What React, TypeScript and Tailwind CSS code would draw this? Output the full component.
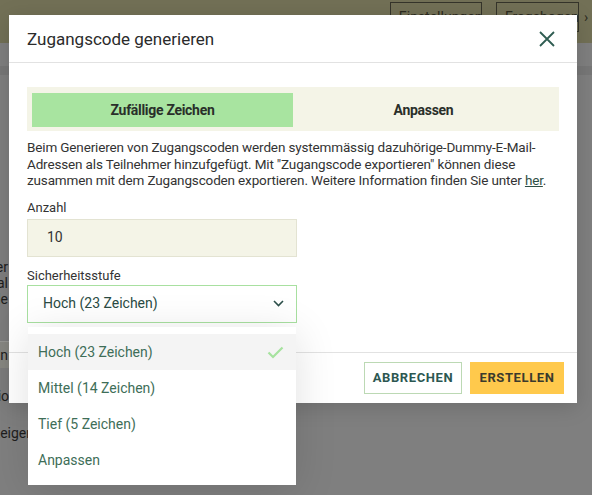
import { useState } from 'react';

const levels = ['Hoch (23 Zeichen)', 'Mittel (14 Zeichen)', 'Tief (5 Zeichen)', 'Anpassen'];

function CloseIcon() {
  return (
    <svg width="18" height="18" viewBox="0 0 18 18" fill="none">
      <path d="M2 2L16 16M16 2L2 16" stroke="#2f5d52" strokeWidth="1.8" />
    </svg>
  );
}

function Chevron() {
  return (
    <svg width="11" height="7" viewBox="0 0 11 7" fill="none">
      <path d="M1 1L5.5 5.5L10 1" stroke="#2c4f4a" strokeWidth="1.6" />
    </svg>
  );
}

function Check() {
  return (
    <svg width="17" height="13" viewBox="0 0 17 13" fill="none">
      <path d="M1.5 6.5L6 11L15.5 1.5" stroke="#a6e29f" strokeWidth="2.2" />
    </svg>
  );
}

export default function App() {
  const [tab, setTab] = useState(0);
  const [level] = useState(0);

  return (
    <div className="relative w-[592px] h-[495px] overflow-hidden bg-[#7f7f7f] font-['Roboto',sans-serif]">
      {/* page behind the overlay */}
      <div className="h-[43px] bg-[#727056] flex justify-end items-start pt-[2px] gap-[5px] text-[14px] text-[#2c2b20]">
        <div className="border border-[#35342a] px-[8px] h-[30px] flex items-center w-[92px] whitespace-nowrap">Einstellungen</div>
        <span className="leading-[30px]">›</span>
        <div className="border border-[#35342a] px-[8px] h-[30px] flex items-center w-[83px] whitespace-nowrap">Fragebogen</div>
        <span className="leading-[30px] w-[8px]">›</span>
      </div>
      <div className="h-[23px]" />
      <div className="h-[9px] bg-[#777777]" />
      <div className="text-[14px] text-[#1e1e1e] leading-[16px] pt-[184px] -ml-[60px] w-[100px]">
        <div className="text-right pr-[32px]">Kalender</div>
        <div className="text-right pr-[32px]">Portal</div>
        <div className="text-right pr-[32px]">Kunde</div>
        <div className="mt-[34px] h-[27px] bg-[#8a8a84] border-t border-[#9a9a96] flex items-center justify-end pr-[32px]">Login</div>
        <div className="mt-[20px] text-right pr-[8px]">Optionen</div>
        <div className="mt-[21px] text-right pr-[6px]">Anzeigen</div>
      </div>

      {/* modal */}
      <div className="absolute left-[9px] top-[15px] w-[568px] bg-white shadow-[0_4px_20px_rgba(0,0,0,0.15)]">
        <div className="h-[48px] flex items-center justify-between pl-[18px] pr-[21px] border-b border-[#e2e2e2]">
          <h2 className="text-[17px] text-[#2b2b2b] pt-[2px]">Zugangscode generieren</h2>
          <button type="button" className="pt-[1px]">
            <CloseIcon />
          </button>
        </div>

        <div className="px-[18px] pt-[24px] pb-[29px]">
          <div className="grid grid-cols-2 bg-[#f4f4e7] pt-[6px] pb-[4px] px-[5px]">
            {['Zufällige Zeichen', 'Anpassen'].map((t, i) => (
              <button
                key={t}
                type="button"
                onClick={() => setTab(i)}
                className={
                  'h-[34px] text-[14px] font-bold text-[#2a2f2a] tracking-[-0.3px] ' +
                  (tab === i ? 'bg-[#a8e4a0]' : '')
                }
              >
                {t}
              </button>
            ))}
          </div>

          <p className="mt-[8px] text-[13.5px] leading-[16.5px] tracking-[-0.15px] text-[#333333] whitespace-nowrap">
            Beim Generieren von Zugangscoden werden systemmässig dazuhörige-Dummy-E-Mail-
            <br />
            Adressen als Teilnehmer hinzufgefügt. Mit "Zugangscode exportieren" können diese
            <br />
            zusammen mit dem Zugangscoden exportieren. Weitere Information finden Sie unter{' '}
            <a className="underline text-[#2f4f45]">her</a>.
          </p>

          <label className="block mt-[11px] text-[13px] leading-[16px] text-[#333333]">Anzahl</label>
          <div className="mt-[3px] w-[270px] h-[38px] bg-[#f4f4e7] border border-[#e3e3d2] flex items-center pl-[19px] text-[14px] text-[#333333]">
            10
          </div>

          <label className="block mt-[11px] text-[13px] leading-[16px] text-[#333333]">Sicherheitsstufe</label>
          <div className="mt-[1px] w-[270px] h-[38px] border border-[#a8e0a0] flex items-center justify-between pl-[15px] pr-[12px] text-[14px] text-[#2a4b43]">
            <span>{levels[level]}</span>
            <Chevron />
          </div>
        </div>

        <div className="border-t border-[#e2e2e2] pt-[9px] pb-[9px] pr-[13px] flex justify-end gap-[8px]">
          <button
            type="button"
            className="w-[98px] h-[32px] border border-[#bcd9b4] text-[13px] font-bold tracking-[0.6px] text-[#2c5751]"
          >
            ABBRECHEN
          </button>
          <button
            type="button"
            className="w-[94px] h-[32px] bg-[#ffc94c] text-[13px] font-bold tracking-[0.6px] text-[#3b3a2c]"
          >
            ERSTELLEN
          </button>
        </div>

        {/* open select menu */}
        <ul className="absolute left-[19px] top-[312px] w-[268px] bg-white py-[7px] shadow-[0_6px_40px_rgba(0,0,0,0.12)]">
          {levels.map((l, i) => (
            <li
              key={l}
              className={
                'h-[36px] flex items-center justify-between pl-[10px] pr-[12px] text-[14px] text-[#3e6e58] ' +
                (i === level ? 'bg-[#f4f4f4]' : '')
              }
            >
              <span>{l}</span>
              {i === level && <Check />}
            </li>
          ))}
        </ul>
      </div>
    </div>
  );
}
